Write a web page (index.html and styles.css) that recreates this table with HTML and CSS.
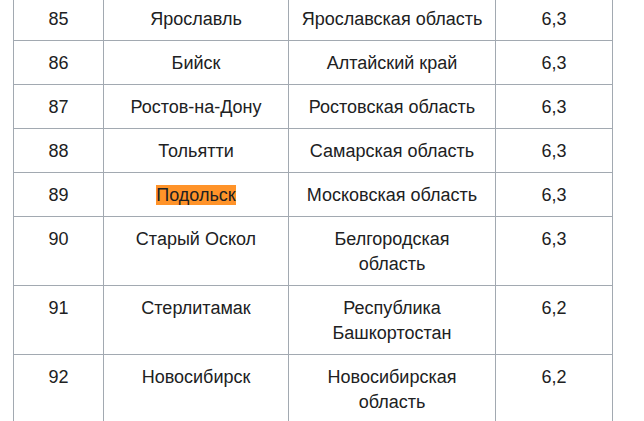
FILE: index.html
```html
<!DOCTYPE html>
<html lang="ru">
<head>
<meta charset="utf-8">
<link rel="stylesheet" href="styles.css">
</head>
<body>
<table class="cities">
  <colgroup>
    <col class="c-num"><col class="c-city"><col class="c-region"><col class="c-val">
  </colgroup>
  <tbody>
    <tr><td>85</td><td>Ярославль</td><td>Ярославская область</td><td>6,3</td></tr>
    <tr><td>86</td><td>Бийск</td><td>Алтайский край</td><td>6,3</td></tr>
    <tr><td>87</td><td>Ростов-на-Дону</td><td>Ростовская область</td><td>6,3</td></tr>
    <tr><td>88</td><td>Тольятти</td><td>Самарская область</td><td>6,3</td></tr>
    <tr><td>89</td><td><span class="hl">Подольск</span></td><td>Московская область</td><td>6,3</td></tr>
    <tr><td>90</td><td>Старый Оскол</td><td>Белгородская<br>область</td><td>6,3</td></tr>
    <tr><td>91</td><td>Стерлитамак</td><td>Республика<br>Башкортостан</td><td>6,2</td></tr>
    <tr><td>92</td><td>Новосибирск</td><td>Новосибирская<br>область</td><td>6,2</td></tr>
  </tbody>
</table>
</body>
</html>
```
FILE: styles.css
```css
html, body {
  margin: 0;
  padding: 0;
  background: #fff;
}
body {
  padding: 0 0 0 13px;
  font-family: "Liberation Sans", Arial, sans-serif;
  font-size: 18px;
  color: #202122;
}
.cities {
  border-collapse: collapse;
  margin-top: -4px;
  table-layout: fixed;
  width: 600px;
}
.c-num { width: 90px; }
.c-city { width: 185px; }
.c-region { width: 207px; }
.c-val { width: 117px; }
.cities td {
  border: 1px solid #a2a9b1;
  padding: 10px 4px 8px;
  line-height: 25px;
  text-align: center;
  vertical-align: top;
}
.hl {
  background: #ff9329;
}
```
